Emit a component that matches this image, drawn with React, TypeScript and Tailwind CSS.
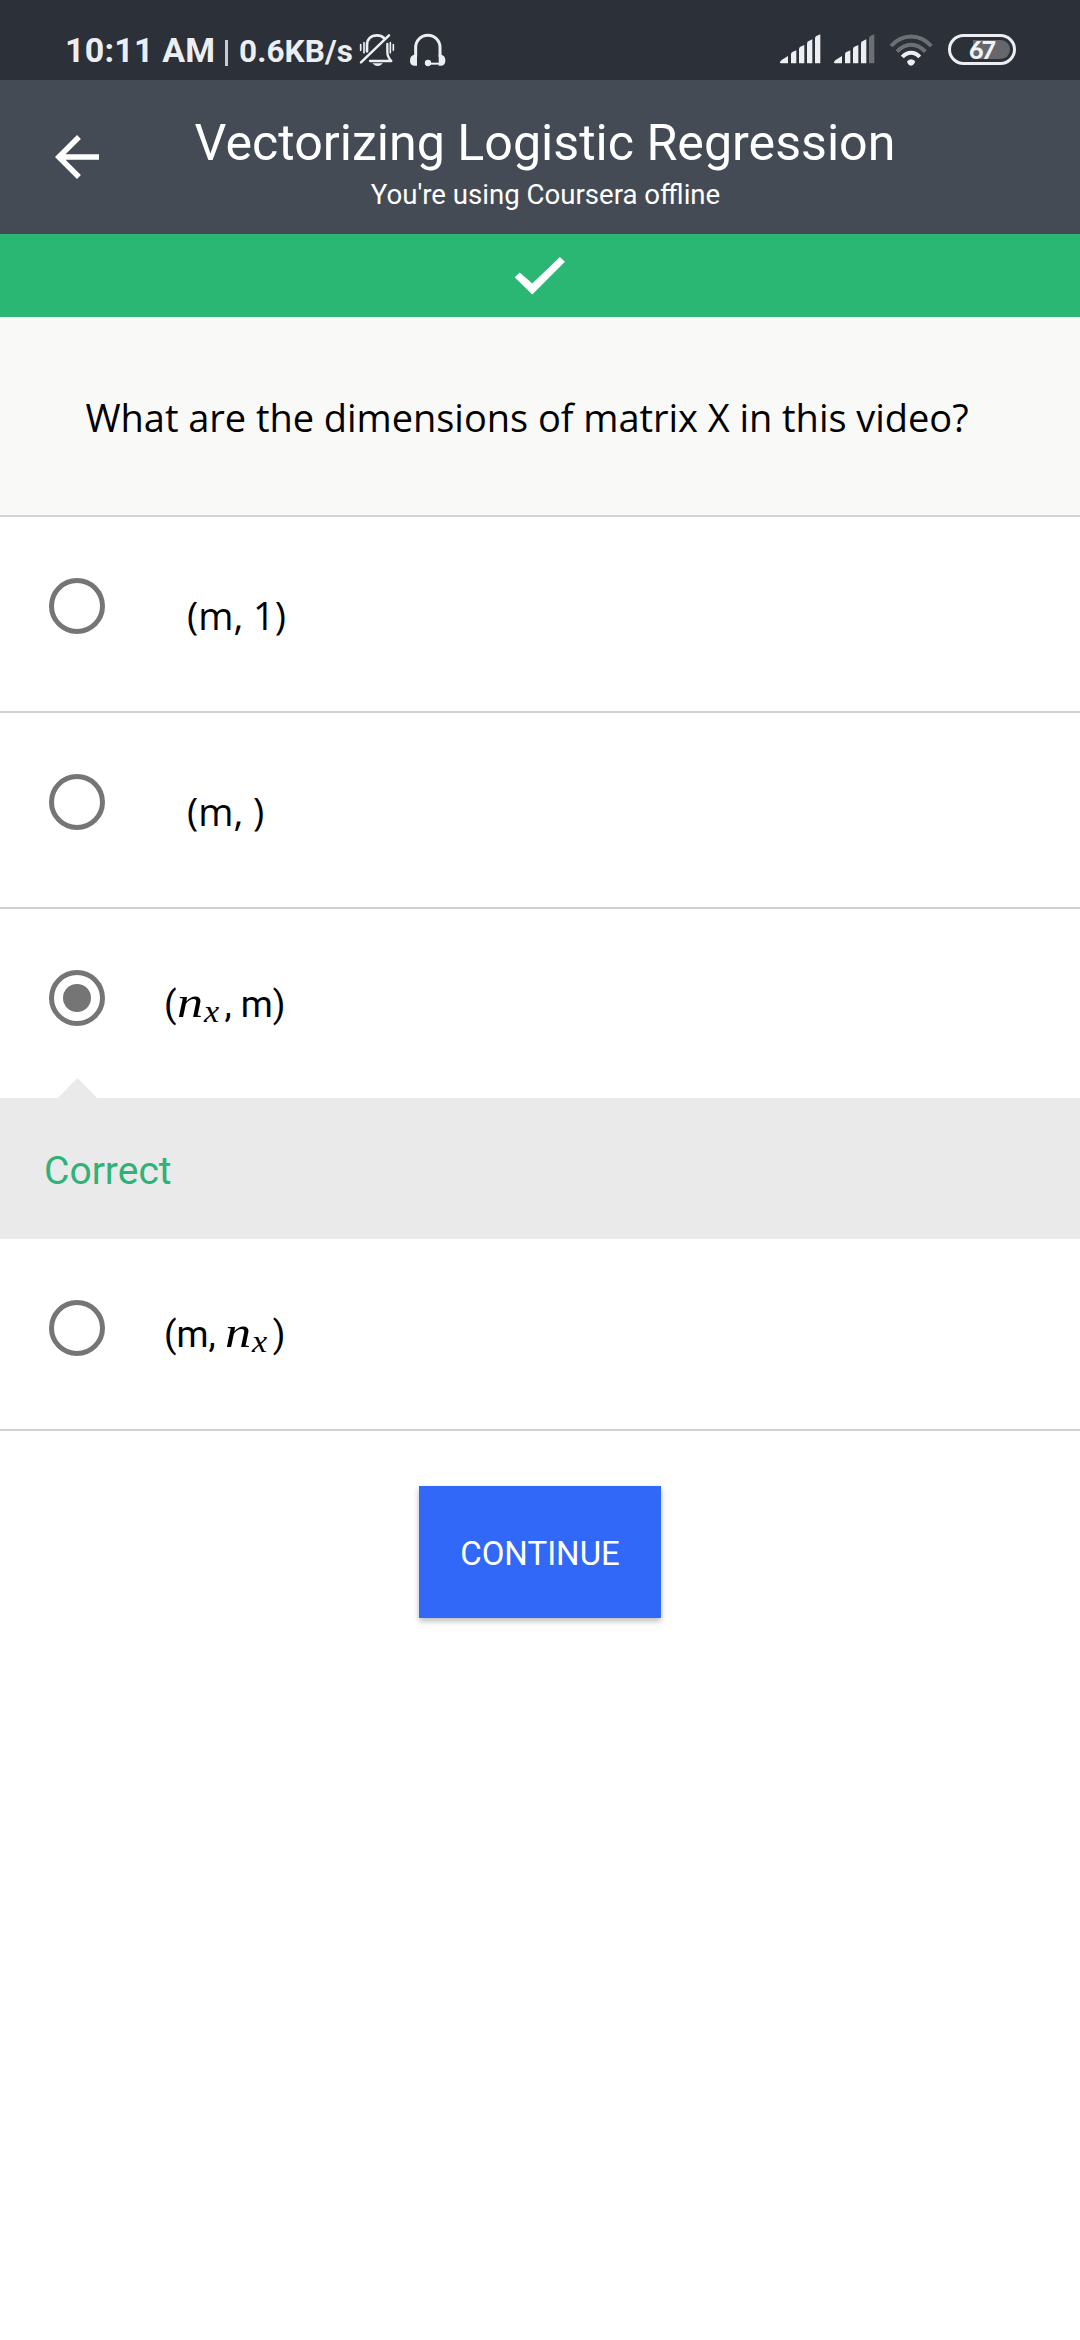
import React from "react";
import type { ReactNode } from "react";

function MutedBellIcon() {
  return (
    <svg className="h-[35px] w-[36px]" viewBox="57 36 108 105" fill="none" stroke="#eceef1" strokeLinecap="round">
      <path d="M81 94V76C81 57 93 46 111 46C120 46 127 49 132 54" strokeWidth="8" />
      <path d="M142 72V96C142 108 147 116 154 123H90" strokeWidth="7" strokeLinejoin="round" />
      <path d="M63 127L147 46" strokeWidth="7.5" />
      <path d="M62 74V91M72 68V98M151 68V98M160 74V91" strokeWidth="5" />
      <path d="M97 130H129C124 135 119 138 113 138C107 138 102 135 97 130Z" fill="#eceef1" stroke="none" />
    </svg>
  );
}

function HeadsetIcon() {
  return (
    <svg className="h-[35px] w-[37px]" viewBox="207 36 111 105" fill="none" stroke="#eceef1">
      <path d="M227 110V82A36.500 36.500 0 0 1 300 82V110" strokeWidth="9" />
      <path d="M222 104H231V137H222C214 137 210 132 210 121C210 111 215 106 222 104Z" fill="#eceef1" stroke="none" />
      <path d="M304 104H296V137H304C312 137 316 132 316 121C316 111 311 106 304 104Z" fill="#eceef1" stroke="none" />
      <path d="M264 131H302" strokeWidth="6" />
      <circle cx="264" cy="129" r="9.500" fill="#eceef1" stroke="none" />
    </svg>
  );
}

function SignalIcon({ weak = false }: { weak?: boolean }) {
  return (
    <svg className="h-[30px] w-[41px]" viewBox="0 0 123 90" fill="#eceef1">
      <path d="M0 86C0 82 2 80 6 77L24 66V88H2Z" />
      <path d="M33 61Q33 57 37 54L49 49V88H33Z" />
      <path d="M57 45Q57 40 61 38L73 33V88H57Z" />
      <path d="M81 29Q81 24 85 22L97 16V88H81Z" />
      <path d="M105 14Q105 8 109 6L121 1V88H105Z" fill={weak ? "#6c6f74" : "#eceef1"} />
    </svg>
  );
}

function WifiIcon() {
  return (
    <svg className="h-[33px] w-[44px]" viewBox="387 38 132 99" fill="none" strokeWidth="12">
      <path d="M393 77C427 39 479 39 514 77" stroke="#6c6f74" />
      <path d="M411 94C436 66 471 66 496 94" stroke="#6c6f74" />
      <path d="M427 110C442 93 465 93 479 110" stroke="#eceef1" />
      <path d="M442 122Q453 111 465 122C466 128 459 136 453 136C447 136 440 128 442 122Z" fill="#eceef1" />
    </svg>
  );
}

function Battery() {
  return (
    <div className="flex h-[31px] w-[68px] items-center rounded-full border-[3px] border-[#eceef1] pr-[3px]">
      <div className="ml-[22px] flex h-[19px] flex-1 items-center rounded-r-full bg-[#65676c]">
        <span className="-ml-[4px] font-['Lato'] text-[25px] leading-[19px] font-black tracking-[-2px] text-[#f1f2f4]">67</span>
      </div>
    </div>
  );
}

function StatusBar() {
  return (
    <div className="flex h-20 items-start justify-between bg-[#2c3038] pr-[64px] pl-[65px] text-[#eceef1]">
      <div className="flex">
        <div className="flex items-baseline pt-[29.5px] font-bold">
          <span className="w-[160px] text-[34px] leading-10 tracking-[0.2px]">10:11 AM</span>
          <span className="h-[26px] w-[3px] translate-y-1 bg-[#c9cbcf]" />
          <span className="ml-[11px] w-[120px] text-[31.5px] leading-10 tracking-[0.1px]">0.6KB/s</span>
        </div>
        <div className="flex gap-[14px] pt-8">
          <MutedBellIcon />
          <HeadsetIcon />
        </div>
      </div>
      <div className="flex pt-[34px]">
        <SignalIcon />
        <div className="ml-[13px]"><SignalIcon weak /></div>
        <div className="-mt-px ml-[14px]"><WifiIcon /></div>
        <div className="ml-[15px]"><Battery /></div>
      </div>
    </div>
  );
}

function Header() {
  return (
    <header className="flex h-[154px] bg-[#454b55] pr-[100px] pl-[44px] text-white">
      <svg className="mt-[44px] size-[66px]" viewBox="0 0 24 24" fill="white">
        <path d="M20 11H7.830L13.420 5.410L12 4L4 12L12 20L13.410 18.590L7.830 13H20Z" />
      </svg>
      <div className="flex flex-1 flex-col items-center pt-[34px]">
        <h1 className="text-[50.15px] leading-[58px] whitespace-nowrap">Vectorizing Logistic Regression</h1>
        <p className="mt-[7px] ml-px text-[27.6px] leading-8 whitespace-nowrap">You're using Coursera offline</p>
      </div>
    </header>
  );
}

function Radio({ checked = false }: { checked?: boolean }) {
  return (
    <div className="mt-[61px] ml-[49px] flex size-[56px] shrink-0 items-center justify-center rounded-full border-[5.500px] border-[#757575]">
      {checked && <div className="size-[28px] rounded-full bg-[#757575]" />}
    </div>
  );
}

function Plain({ children }: { children: ReactNode }) {
  return <div className="mt-[72px] ml-[82px] font-['Open_Sans'] text-[38px] leading-[52px]">{children}</div>;
}

function Formula({ children }: { children: ReactNode }) {
  return (
    <div className="mt-[72px] ml-[59px] flex items-baseline self-start text-[36.500px] leading-[43px] whitespace-pre">{children}</div>
  );
}

function Nx() {
  return (
    <span className="inline-flex items-baseline font-['Liberation_Serif'] italic">
      <span className="w-[27px] origin-left scale-x-[1.16] text-[45px] leading-[43px]">n</span>
      <span className="w-[17px] origin-left translate-y-[5px] scale-x-[1.1] text-[31px] leading-[43px]">x</span>
    </span>
  );
}

export default function App() {
  return (
    <div className="min-h-[2340px] w-[1080px] bg-white font-['Roboto'] text-black">
      <StatusBar />
      <Header />
      <div className="flex h-[83px] justify-center bg-[#2ab673]">
        <svg className="mt-[22px] h-[40px] w-[52px]" viewBox="514 256 52 40" fill="white">
          <path d="M514.700 277.300L519.700 272.500L532.300 283.500L559.900 257L564.900 261.700L532.300 294.500Z" />
        </svg>
      </div>
      <div className="h-[200px] border-b-2 border-[#d1d4d3] bg-[#f9f9f7] pt-[74px] pl-[85.5px] font-['Open_Sans'] text-[38px] leading-[52px] tracking-[-0.04px] whitespace-nowrap">
        What are the dimensions of matrix X in this video?
      </div>
      <div className="flex h-[196px] border-b-2 border-[#d0d0d0]">
        <Radio />
        <Plain>(m, 1)</Plain>
      </div>
      <div className="flex h-[196px] border-b-2 border-[#d0d0d0]">
        <Radio />
        <Plain>(m, )</Plain>
      </div>
      <div className="flex h-[189px]">
        <Radio checked />
        <Formula>
          <span>(</span>
          <Nx />
          <span className="ml-[4px]">, m)</span>
        </Formula>
      </div>
      <div className="relative h-[141px] bg-[#eaeaea] pt-[50px] pl-11 text-[39px] leading-[46px] text-[#2fb277]">
        <svg className="absolute -top-5 left-[57px] h-[21px] w-[41px]" viewBox="0 0 41 21" fill="#eaeaea">
          <path d="M20.500 0L41 21H0Z" />
        </svg>
        Correct
      </div>
      <div className="flex h-[192px] border-b-2 border-[#d0d0d0]">
        <Radio />
        <Formula>
          <span>(m, </span>
          <Nx />
          <span className="ml-[4px]">)</span>
        </Formula>
      </div>
      <div className="mt-[55px] flex justify-center">
        <button className="h-[132px] w-[242px] bg-[#3168f7] pt-[3px] text-[33px] leading-[39px] text-white shadow-[0_3px_6px_rgba(0,0,0,0.28)]">
          CONTINUE
        </button>
      </div>
    </div>
  );
}
